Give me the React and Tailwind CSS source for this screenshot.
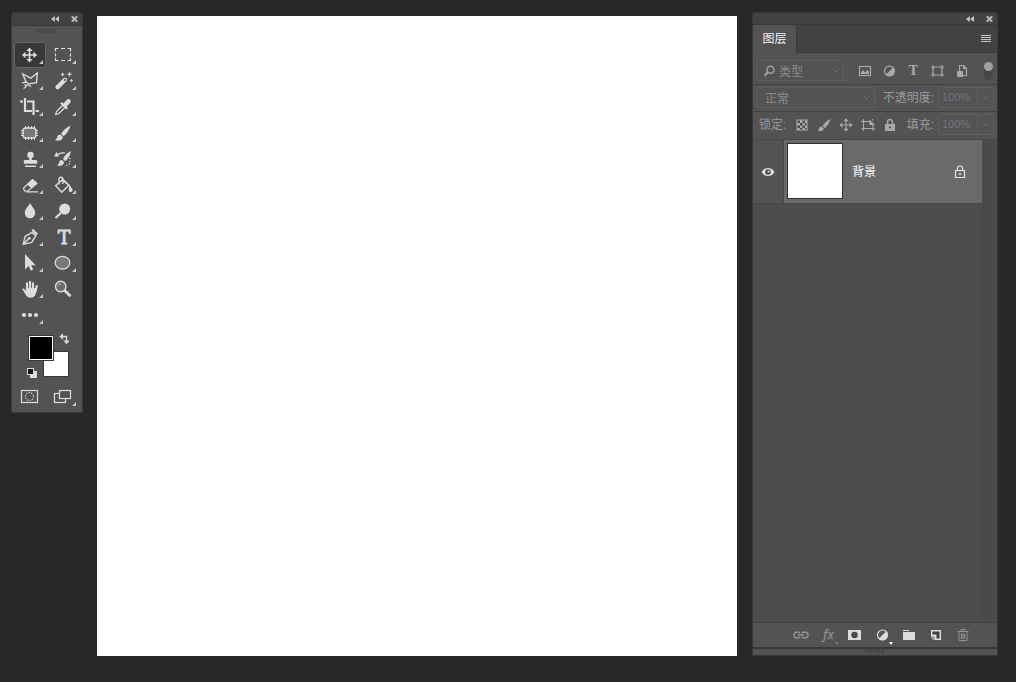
import React, { useState } from 'react';

const FONT = 'font-["Liberation_Sans","Noto_Sans_CJK_SC",sans-serif]';

function ToolIcon({ children }) {
  return (
    <svg viewBox="0 0 32 26" className="block h-full w-full" fill="none" stroke="#dcdcdc" strokeWidth="1.5" aria-hidden="true">
      {children}
    </svg>
  );
}

const F = { fill: '#dcdcdc', stroke: 'none' };

const tools = [
  {
    name: '移动工具',
    art: (
      <>
        <path d="M15.500 7.500v11M10 13h11" strokeWidth="1.700" />
        <path {...F} d="M15.500 5.400l3.200 3.600h-6.400zM15.500 20.600l3.200-3.600h-6.400zM7.900 13l3.600-3.200v6.400zM23.100 13l-3.600-3.200v6.400z" />
      </>
    ),
  },
  {
    name: '矩形选框工具',
    art: (
      <path d="M8.500 9.500v-3h3M14 6.500h4M20.500 6.500h3v3M23.500 11.500v3M23.500 16v2.500h-3M18 18.500h-4M11.500 18.500h-3v-2.500M8.500 14.500v-3" strokeWidth="1.200" />
    ),
  },
  {
    name: '多边形套索工具',
    art: (
      <>
        <path d="M12.500 15L8.700 6l8 4.200 6.600-5.200-.8 9.600-8 1.300" strokeWidth="1.400" />
        <path d="M8 14.800l3.500-.6c2 .2 3 1.300 2.500 2.600-.8 1-3 .5-3.400-.6M14 16.200l3 2.500M12 17.500c.3 1.500-1 2.500-2.500 3" strokeWidth="1.300" />
      </>
    ),
  },
  {
    name: '魔棒工具',
    art: (
      <>
        <path d="M10.500 19.300l7.500-7.500" strokeWidth="4.200" strokeLinecap="round" />
        <path d="M16 11.800l1.900-1.600 1.800 1.800-1.700 1.800z" fill="#535353" strokeWidth="0.900" />
        <path {...F} d="M15.600 4.300l.7 1.500 1.500.7-1.500.7-.7 1.500-.7-1.500-1.500-.7 1.500-.7zM22.500 3.500l.8 2 2 .8-2 .8-.8 2-.8-2-2-.8 2-.8zM24.500 10.500l.6 1.400 1.400.6-1.400.6-.6 1.400-.6-1.400-1.400-.6 1.400-.6z" />
      </>
    ),
  },
  { name: '裁剪工具', art: <path d="M11 4v13h7M21.500 17H25M6 7.500h3M13 7.500h6.500V21" strokeWidth="2.200" /> },
  {
    name: '吸管工具',
    art: (
      <>
        <path d="M8.700 20.400l.8-2.900 7-7 2.200 2.200-7 7z" strokeWidth="1.300" />
        <path d="M14 8.700l6.300 6" strokeWidth="2.200" />
        <path d="M18 11l3.500-3.600" strokeWidth="4.400" strokeLinecap="round" />
      </>
    ),
  },
  {
    name: '修补工具',
    art: (
      <>
        <rect x="9" y="8" width="13" height="10" rx="3" fill="#777" strokeWidth="1.400" />
        <path d="M11.500 6v3M14.500 6v3M17.500 6v3M20.500 6v3M11.500 17v3M14.500 17v3M17.500 17v3M20.500 17v3M7 10.500h3M7 13h3M7 15.500h3M21 10.500h3M21 13h3M21 15.500h3" strokeWidth="1" />
      </>
    ),
  },
  {
    name: '画笔工具',
    art: <path {...F} d="M23.500 5.500c-4 2-7.400 4.800-9.400 8.200l2.500 2.500C19.500 14 22.500 10 23.500 5.500zM13.400 14.500c-2.400 0-3.200 1.500-3.400 3-.2 1-.9 1.800-2 2.200 2.800 1.900 7.400 1 8-2.700z" />,
  },
  {
    name: '仿制图章工具',
    art: (
      <>
        <circle cx="16.500" cy="9" r="3.200" {...F} />
        <path {...F} d="M15.200 10h2.600v4H22q1.200 0 1.200 1v2.800H9.800V15q0-1 1.200-1h4.200zM11 19.500h11v1.500H11z" />
      </>
    ),
  },
  {
    name: '历史记录画笔工具',
    art: (
      <>
        <path {...F} d="M24 5c-3.500 1.500-6.500 4.700-8 8l2.300 2.200C21 13 23.500 9 24 5zM15 14c-2.300.2-2.900 1.600-3 3-.2 1-.9 1.900-2 2.200 3 1.500 6.500.3 7.200-3z" />
        <path d="M9.500 10c2-3.500 5-3 8.500-3.200" strokeWidth="1.300" />
        <path {...F} d="M7 10.500l2.500-4.500 2.500 4.500z" />
        <path d="M22.800 12v5.500l-5 3.200" strokeWidth="1.200" strokeDasharray="1.200 1.600" />
      </>
    ),
  },
  {
    name: '橡皮擦工具',
    art: (
      <>
        <path d="M9.500 16.300l9-8.800 4.400 4-9 7.500h-3.400z" strokeWidth="1.200" />
        <path {...F} d="M13 12.300l5.500-5.200 4.800 4.200-5.500 5.200zM12 19.200h12v1.300H12z" />
      </>
    ),
  },
  {
    name: '油漆桶工具',
    art: (
      <>
        <path d="M8.600 13.500l7.300-6.100 6 5.800-7.200 7zM15.900 12V7.500c0-3-4-3-3.900-.2v5.200" strokeWidth="1.400" />
        <path {...F} d="M15.500 6.500l7.200 6.700 2.700 3.800c1.400 3.500-4 4.300-3.600.7l.3-3.400-7.200-6z" />
      </>
    ),
  },
  { name: '模糊工具', art: <path {...F} d="M16 4.700c1 3 5.200 6 5.200 10.300a5.200 5.200 0 0 1-10.400 0C10.800 10.700 15 7.700 16 4.700z" /> },
  {
    name: '减淡工具',
    art: (
      <>
        <circle cx="17.700" cy="11" r="5.500" {...F} />
        <path d="M8.500 20l5.500-5.200" strokeWidth="2.200" />
      </>
    ),
  },
  {
    name: '钢笔工具',
    art: (
      <>
        <path d="M9.300 20.400l1.800-8 7-4 3.600 3.500-4 6.500zM9.500 20l5-5" strokeWidth="1.400" />
        <circle cx="15.300" cy="14.300" r="1.400" {...F} />
        <path {...F} d="M17.500 6.500l1.500-1.700 5 5-1.600 1.700z" />
      </>
    ),
  },
  {
    name: '横排文字工具',
    art: (
      <text x="17" y="20" textAnchor="middle" fill="#dcdcdc" stroke="#dcdcdc" strokeWidth="0.800" fontFamily="DejaVu Serif" fontSize="19">T</text>
    ),
  },
  { name: '路径选择工具', art: <path {...F} d="M11 4v15.500l3.700-3.400 2 4.700 2.500-1.100-2-4.500h4.500z" /> },
  { name: '椭圆工具', art: <ellipse cx="15.500" cy="12.700" rx="7.300" ry="6.300" fill="#777" strokeWidth="1.300" /> },
  {
    name: '抓手工具',
    art: (
      <>
        <path d="M13 14V7.300M16 13V5.800M19 14V7.300M21.500 15l1.300-5" strokeWidth="2.200" strokeLinecap="round" />
        <path {...F} d="M8 12.700c1.300-.8 2.600.2 3.900 2.300V12h9.600l1.200 2c-.6 4-1.700 7.300-5.700 7.700-4.700.3-5.500-4.200-9-9z" />
      </>
    ),
  },
  {
    name: '缩放工具',
    noMore: true,
    art: (
      <>
        <circle cx="13.700" cy="10.500" r="5.200" fill="#6b6b6b" strokeWidth="1.400" />
        <path d="M17.500 14.300l6 6" strokeWidth="2.700" />
        <path d="M11 9.500q.8-1.600 2.600-1.700" strokeWidth="0.900" />
      </>
    ),
  },
  {
    name: '编辑工具栏',
    art: (
      <>
        <circle cx="10" cy="13" r="2.100" {...F} />
        <circle cx="16" cy="13" r="2.100" {...F} />
        <circle cx="22" cy="13" r="2.100" {...F} />
      </>
    ),
  },
];

function WindowBar({ label, height }) {
  return (
    <div className={`flex items-center justify-end gap-3 bg-[#424242] pr-1 ${height}`}>
      <button type="button" aria-label={`折叠${label}`} className="block">
        <svg viewBox="0 0 8 6" className="block h-1.5 w-2" fill="#c8c8c8">
          <path d="M3.800 0v6L0 3zM8 0v6L4.200 3z" />
        </svg>
      </button>
      <button type="button" aria-label={`关闭${label}`} className="block">
        <svg viewBox="0 0 7 6" className="block h-1.5 w-[7px]" fill="none" stroke="#b8b8b8" strokeWidth="2">
          <path d="M.8.300l5.400 5.400M6.200.3L.8 5.700" />
        </svg>
      </button>
    </div>
  );
}

function Grip() {
  return (
    <svg viewBox="0 0 20 4" className="block h-1 w-5" stroke="#414141" aria-hidden="true">
      <path d="M0 2h20" strokeWidth="4" strokeDasharray="1 1" />
    </svg>
  );
}

function Toolbox() {
  const [active, setActive] = useState(0);
  return (
    <aside aria-label="工具" className="w-[72px] shrink-0 rounded-t-sm border border-[#383838] bg-[#535353]">
      <WindowBar label="工具" height="h-3" />
      <div className="flex h-[17px] justify-center border-t border-[#383838] pt-[3px]">
        <Grip />
      </div>
      <div className="grid grid-cols-[32px_32px] gap-x-px px-0.5">
        {tools.map((t, i) => (
          <button
            key={t.name}
            type="button"
            aria-label={t.name}
            aria-pressed={active === i}
            onClick={() => setActive(i)}
            className={
              active === i
                ? 'h-[26px] rounded-[3px] bg-[#383838] shadow-[inset_0_0_0_1px_#666666]'
                : 'h-[26px] rounded-[3px]'
            }
          >
            <ToolIcon>
              {t.art}
              {!t.noMore && <path d="M29 18v4h-4z" fill="#c8c8c8" stroke="none" />}
            </ToolIcon>
          </button>
        ))}
      </div>
      <div className="flex h-14 justify-center pt-0.5">
        <svg viewBox="0 0 70 48" className="h-12 w-[70px]" role="img" aria-label="前景色和背景色">
          <rect x="31.500" y="21.500" width="25" height="25" fill="#fff" stroke="#383838" />
          <rect x="16.500" y="5.500" width="25" height="25" fill="#fff" stroke="#383838" />
          <rect x="18" y="7" width="22" height="22" fill="#000" />
          <path d="M50 6.500h4.500V11" fill="none" stroke="#dcdcdc" strokeWidth="1.300" />
          <path d="M51 3.300v6.400L47.300 6.500zM51.300 10.500h6.400l-3.200 3.800z" fill="#dcdcdc" />
          <rect x="18" y="41" width="7" height="7" fill="#dcdcdc" />
          <rect x="15.500" y="38.500" width="6" height="6" fill="#111" stroke="#dcdcdc" />
        </svg>
      </div>
      <div className="grid h-7 grid-cols-[32px_32px] gap-x-px px-0.5">
        <button type="button" aria-label="以快速蒙版模式编辑" className="h-[26px]">
          <ToolIcon>
            <rect x="7.500" y="6.500" width="16" height="12" strokeWidth="1.200" />
            <circle cx="15.500" cy="12.500" r="4" strokeWidth="1.200" strokeDasharray="1.200 1.300" />
          </ToolIcon>
        </button>
        <button type="button" aria-label="更改屏幕模式" className="h-[26px]">
          <ToolIcon>
            <rect x="7.500" y="9.500" width="11" height="9" strokeWidth="1.200" />
            <rect x="12.500" y="6.500" width="11" height="8" fill="#535353" strokeWidth="1.200" />
            <path d="M29 18v4h-4z" fill="#c8c8c8" stroke="none" />
          </ToolIcon>
        </button>
      </div>
    </aside>
  );
}

function Glyph({ children }) {
  return (
    <svg viewBox="0 0 16 16" className="block size-4 overflow-visible" fill="none" stroke="currentColor" strokeWidth="1.200" aria-hidden="true">
      {children}
    </svg>
  );
}

function Chevron() {
  return (
    <svg viewBox="0 0 8 5" className="block h-[5px] w-2" fill="none" stroke="#6c6c6c" aria-hidden="true">
      <path d="M.8.800L4 4 7.200.8" />
    </svg>
  );
}

function SelectBox({ label, value, options, box, pad, children }) {
  return (
    <div className={`relative flex h-[21px] items-center rounded-[3px] border border-[#5f5f5f] ${box}`}>
      {children}
      <select aria-label={label} defaultValue={value} className={`h-full w-full appearance-none bg-transparent pt-0.5 text-[12px] text-[#8c8c8c] outline-none ${pad}`}>
        {options.map((o) => (
          <option key={o}>{o}</option>
        ))}
      </select>
      <span className="pointer-events-none absolute right-[3px]">
        <Chevron />
      </span>
    </div>
  );
}

function PercentBox({ id, label }) {
  return (
    <>
      <label htmlFor={id} className="mr-1 ml-auto whitespace-nowrap pt-px text-[12px] text-[#999999]">
        {`${label}:`}
      </label>
      <div className="flex h-[21px] w-14 shrink-0 items-stretch rounded-[3px] border border-[#5f5f5f]">
        <input id={id} defaultValue="100%" className="w-[39px] border-r border-[#5f5f5f] bg-transparent pl-[3px] text-[11px] text-[#767676] outline-none" />
        <button type="button" aria-label={`${label}滑块`} className="flex flex-1 items-center justify-center">
          <Chevron />
        </button>
      </div>
    </>
  );
}

const filterIcons = [
  ['像素图层滤镜', <><rect x="2.500" y="3.500" width="11" height="9" /><path d="M4 11V9.500L6 7l2 2.500L10.500 7 12 9v2z" fill="currentColor" stroke="none" /></>],
  ['调整图层滤镜', <><circle cx="8.500" cy="8" r="4.900" /><path d="M12.300 4.200L4.700 11.800A5.300 5.300 0 0 0 12.300 4.200z" fill="currentColor" stroke="none" /></>],
  ['文字图层滤镜', <text x="8.500" y="12" textAnchor="middle" fontFamily="DejaVu Serif" fontWeight="bold" fontSize="12.500" fill="currentColor" stroke="none">T</text>],
  ['形状图层滤镜', <><path d="M5 4h7M5 12h7M4 5v6M13 5v6" /><path d="M3 3h2v2H3zM12 3h2v2h-2zM3 11h2v2H3zM12 11h2v2h-2z" strokeWidth="1" /></>],
  ['智能对象滤镜', <><path d="M6.500 8V2.500h4l3 3v7H10M10.500 2.500V5.500h3" /><path d="M4 8h6v6H4z" fill="currentColor" stroke="none" /></>],
];

const lockIcons = [
  ['锁定透明像素', <><path d="M2.500 2.500h11v11h-11z" fill="currentColor" stroke="none" /><path d="M3.500 3.500H6V6H3.500zM8.500 3.500h2.500V6H8.500zM6 6h2.500v2.500H6zM11 6h1.500v2.500H11zM3.500 8.500H6V11H3.500zM8.500 8.500H11V11H8.500zM6 11h2.500v1.500H6zM11 11h1.500v1.500H11z" fill="#4c4c4c" stroke="none" /></>],
  ['锁定图像像素', <path d="M14.500 2C10.500 4 7.800 6.500 6.500 9l2.200 2.200C11.300 9 13.700 6 14.500 2zM5.600 9.500c-2 0-2.400 1.200-2.600 2.500-.2.800-.6 1.300-1.500 1.600 2.500 1.300 5.900.6 6.400-2z" fill="currentColor" stroke="none" />],
  ['锁定位置', <><path d="M8 3v10M3 8h10" /><path d="M8 1.300l2.700 3H5.300zM8 14.700l2.700-3H5.300zM1.300 8l3-2.700v5.400zM14.700 8l-3-2.700v5.400z" fill="currentColor" stroke="none" /></>],
  ['防止在画板内外自动嵌套', <><path d="M3.500 2v12M1 4.500h9.500L13 7v7M1 11.500h14" /><path d="M10 4l3.500 3.500H10zM12.500 3.500v-1.500" fill="currentColor" /></>],
  ['锁定全部', <><path d="M3 7h10v7H3z" fill="currentColor" stroke="none" /><path d="M5.500 7V5a2.500 2.500 0 0 1 5 0v2" strokeWidth="1.600" /><circle cx="8" cy="10.300" r="1.100" fill="#535353" stroke="none" /></>],
];

const footerIcons = [
  ['链接图层', false, <path d="M7 6.200A3.200 2.700 0 0 0 4.200 5C2 5 1 6.500 1 8s1 3 3.200 3A3.200 2.700 0 0 0 7 9.800M9 6.200A3.200 2.700 0 0 1 11.800 5C14 5 15 6.500 15 8s-1 3-3.200 3A3.200 2.700 0 0 1 9 9.800M4.800 8h6.400" strokeWidth="1.400" />],
  ['添加图层样式', false, <text x="8.500" y="12" textAnchor="middle" fontFamily="Open Sans" fontStyle="italic" fontSize="13" fill="currentColor" stroke="currentColor" strokeWidth="0.300">fx</text>],
  ['添加图层蒙版', true, <><path d="M1 3h13v10H1z" fill="currentColor" stroke="none" /><circle cx="7.500" cy="8" r="3.200" fill="#484848" stroke="none" /></>],
  ['创建新的填充或调整图层', true, <><circle cx="8.500" cy="8" r="5" /><path d="M12.300 4.200L4.700 11.800A5.400 5.400 0 0 0 12.300 4.200z" fill="currentColor" stroke="none" /></>],
  ['创建新组', true, <path d="M2 3h6v1H2zM2 5h11.500q.5 0 .5.500V13H2z" fill="currentColor" stroke="none" />],
  ['创建新图层', true, <><path d="M3 3h10v10H3z" fill="currentColor" stroke="none" /><path d="M4.500 4.500h7v7H8.500v-4h-4z" fill="#404040" stroke="none" /><path d="M3 9.500h3.500V13H6L3 10z" fill="#8a8a8a" stroke="none" /><path d="M2.500 10l3.500 3.500H2.500z" fill="#535353" stroke="none" /></>],
  ['删除图层', false, <path d="M2.500 4.500h11M6 4V2.500h4V4M4 5v8.500h8V5M6.500 6.500v5.500M8 6.500v5.500M9.500 6.500v5.500" strokeWidth="1" />],
];

function LayersPanel() {
  const [visible, setVisible] = useState(true);
  return (
    <aside aria-label="图层" className="flex w-[246px] shrink-0 flex-col self-stretch rounded-t-sm border border-[#383838] bg-[#535353]">
      <WindowBar label="图层面板" height="h-[11px]" />
      <div className="flex h-[29px] items-stretch border-t border-[#383838] bg-[#424242]">
        <button type="button" className="-mb-px w-11 border-r border-[#383838] bg-[#535353] pb-px text-[12px] text-[#f0f0f0]">
          图层
        </button>
        <div className="flex flex-1 items-center justify-end border-b border-[#383838] pr-1.5">
          <button type="button" aria-label="面板菜单">
            <svg viewBox="0 0 10 8" className="block h-2 w-2.5" stroke="#c4c4c4">
              <path d="M0 .5h10M0 2.500h10M0 4.500h10M0 6.500h10" />
            </svg>
          </button>
        </div>
      </div>

      <div className="flex h-8 items-center border-b border-[#404040] pt-1 pl-[3px] text-[#a8a8a8]">
        <SelectBox label="选取滤镜类型" value="类型" options={['类型', '名称', '效果', '模式']} box="w-[88px]" pad="pl-1">
          <span className="ml-1.5 text-[#a0a0a0]">
            <svg viewBox="0 0 12 12" className="block size-3" fill="none" stroke="currentColor" strokeWidth="1.500" aria-hidden="true">
              <circle cx="7.500" cy="4.800" r="3.500" />
              <path d="M5 7.300L1.500 10.700" strokeWidth="2" />
            </svg>
          </span>
        </SelectBox>
        <div className="ml-[9px] flex">
          {filterIcons.map(([name, art]) => (
            <button key={name} type="button" aria-label={name} className="flex w-6 justify-center">
              <Glyph>{art}</Glyph>
            </button>
          ))}
        </div>
        <button type="button" role="switch" aria-checked="true" aria-label="打开或关闭图层滤镜" className="mr-1 ml-auto h-[18px] w-[9px] rounded-full bg-[#474747]">
          <span className="mb-auto block size-[9px] -translate-y-1 rounded-full bg-[#a0a0a0]" />
        </button>
      </div>

      <div className="flex h-[27px] items-center border-b border-[#404040] pr-[3px] pb-px pl-[3px]">
        <SelectBox label="混合模式" value="正常" options={['正常', '溶解', '变暗', '正片叠底']} box="w-[119px]" pad="pl-2" />
        <PercentBox id="opacity" label="不透明度" />
      </div>

      <div className="flex h-7 items-center border-b border-[#484848] pr-[3px] pb-0.5 pl-1.5">
        <span className="whitespace-nowrap pt-px text-[12px] text-[#999999]">锁定:</span>
        <div className="ml-[5px] flex text-[#a8a8a8]">
          {lockIcons.map(([name, art]) => (
            <button key={name} type="button" aria-label={name} className="flex w-[22px] justify-center">
              <Glyph>{art}</Glyph>
            </button>
          ))}
        </div>
        <PercentBox id="fill" label="填充" />
      </div>

      <div className="flex flex-1 bg-[#4d4d4d]">
        <ul className="flex-1">
          <li className="flex h-16 items-stretch border-b border-[#464646] bg-[#6a6a6a]">
            <button
              type="button"
              aria-label="指示图层可见性"
              aria-pressed={visible}
              onClick={() => setVisible(!visible)}
              className="flex w-[31px] items-center justify-center border-r border-[#464646] bg-[#535353]"
            >
              <svg viewBox="0 0 14 10" className="block h-2.5 w-3.5" aria-hidden="true">
                <path d="M.5 5C2.500 2 4.500 1 7 1s4.500 1 6.500 4C11.500 8 9.500 9 7 9S2.500 8 .5 5z" fill="#e4e4e4" />
                <circle cx="7" cy="5" r="2.800" fill="#484848" />
                <circle cx="7.500" cy="4.500" r="1.100" fill="#e4e4e4" />
              </svg>
            </button>
            <div className="flex flex-1 items-center pr-4 pl-[3px]">
              <span className="mt-[3px] size-14 shrink-0 self-start border border-[#303030] bg-white" />
              <span className="ml-[9px] flex-1 pt-px text-[12px] text-white">背景</span>
              <svg viewBox="0 0 12 14" className="block h-3.5 w-3" fill="none" stroke="#e4e4e4" strokeWidth="1.200" role="img" aria-label="已锁定">
                <path d="M1.500 5.500h9v7h-9zM3.500 5.500V3.500a2.500 2.500 0 0 1 5 0v2" />
                <circle cx="6" cy="9" r="1" fill="#e4e4e4" stroke="none" />
              </svg>
            </div>
          </li>
        </ul>
        <div className="w-[15px] bg-[#4a4a4a]" />
      </div>

      <div className="flex h-[25px] items-center justify-end border-t border-[#404040] pr-[21px]">
        {footerIcons.map(([name, enabled, art], i) => (
          <button
            key={name}
            type="button"
            aria-label={name}
            className={enabled ? 'relative flex w-[27px] justify-center text-[#dcdcdc]' : 'relative flex w-[27px] justify-center text-[#929292]'}
          >
            <Glyph>{art}</Glyph>
            {(i === 1 || i === 3) && (
              <svg viewBox="0 0 4 3" className={i === 1 ? 'absolute right-0.5 -bottom-0.5 h-[3px] w-1 fill-[#777777]' : 'absolute right-0.5 -bottom-0.5 h-[3px] w-1 fill-white'} aria-hidden="true">
                <path d="M0 0h4L2 3z" />
              </svg>
            )}
          </button>
        ))}
      </div>
      <div className="flex h-2 justify-center border-t-2 border-[#383838]">
        <Grip />
      </div>
    </aside>
  );
}

export default function App() {
  return (
    <main className={`flex min-h-screen items-start bg-[#282828] pt-3 pr-[18px] pb-[26px] pl-[11px] ${FONT}`}>
      <Toolbox />
      <section aria-label="画布" className="mt-1 mr-[15px] ml-3.5 flex-1 self-stretch bg-white" />
      <LayersPanel />
    </main>
  );
}
